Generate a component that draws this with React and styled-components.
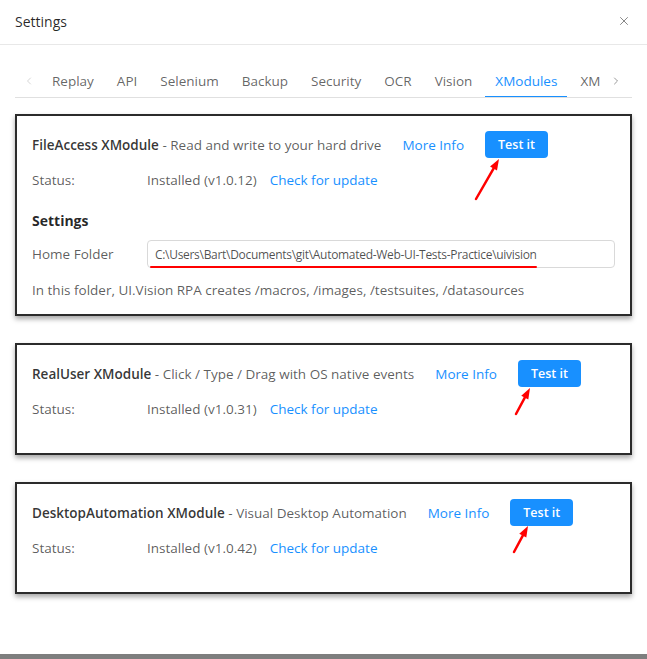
import React from "react";
import styled, { createGlobalStyle } from "styled-components";
import { X, ChevronLeft, ChevronRight } from "lucide-react";

const GlobalStyle = createGlobalStyle`
  html, body {
    margin: 0;
    padding: 0;
    background: #fff;
  }
  body {
    font-family: "Open Sans", "Noto Sans", sans-serif;
    color: rgba(0, 0, 0, 0.65);
  }
`;

const Page = styled.div`
  height: 659px;
  display: flex;
  flex-direction: column;
  overflow: hidden;
`;

const Modal = styled.div`
  flex: 1;
  background: #fff;
  display: flex;
  flex-direction: column;
`;

const Header = styled.div`
  height: 45px;
  box-sizing: border-box;
  border-bottom: 1px solid #e8e8e8;
  display: flex;
  align-items: center;
  justify-content: space-between;
  padding: 0 16px 2px 15px;
`;

const HeaderTitle = styled.div`
  font-size: 14px;
  color: rgba(0, 0, 0, 0.85);
`;

const CloseButton = styled.button`
  border: none;
  background: none;
  padding: 0;
  display: flex;
  color: #777;
  cursor: pointer;
`;

const Body = styled.div`
  padding: 20px 15px 0 15px;
`;

const TabBar = styled.div`
  display: flex;
  align-items: center;
  height: 32px;
  border-bottom: 1px solid #e0e0e0;
`;

const TabArrow = styled.div`
  width: ${({ $w }) => $w}px;
  display: flex;
  justify-content: center;
  color: ${({ $faded }) => ($faded ? "#c8c8c8" : "#777")};
  flex-shrink: 0;
`;

const TabList = styled.div`
  flex: 1;
  overflow: hidden;
  display: flex;
  height: 100%;
  white-space: nowrap;
`;

const Tab = styled.div`
  position: relative;
  flex-shrink: 0;
  padding: 0 10px;
  margin-right: 3px;
  height: 100%;
  display: flex;
  align-items: center;
  font-size: 13.5px;
  color: ${({ $active }) => ($active ? "#1890ff" : "rgba(0, 0, 0, 0.62)")};

  &::after {
    content: "";
    display: ${({ $active }) => ($active ? "block" : "none")};
    position: absolute;
    left: 0;
    right: 0;
    bottom: -1px;
    height: 2px;
    background: #1890ff;
  }
`;

const Cards = styled.div`
  display: flex;
  flex-direction: column;
  gap: 27px;
  margin-top: 16px;
`;

const Card = styled.div`
  border: 2px solid #2b2b2b;
  box-shadow: 0 3px 5px rgba(0, 0, 0, 0.35);
  padding: 15px 15px ${({ $pb }) => $pb}px 15px;
  display: flex;
  flex-direction: column;
`;

const TitleRow = styled.div`
  display: flex;
  align-items: center;
  height: 27px;
  font-size: 13.5px;
`;

const ModuleName = styled.span`
  font-weight: 600;
  color: rgba(0, 0, 0, 0.8);
`;

const Link = styled.a`
  color: #1890ff;
  text-decoration: none;
  cursor: pointer;
  margin-left: ${({ $ml }) => $ml || 0}px;
`;

const ButtonWrap = styled.div`
  position: relative;
  margin-left: 21px;
`;

const TestButton = styled.button`
  width: 63px;
  height: 27px;
  border: none;
  border-radius: 4px;
  background: #1890ff;
  color: #fff;
  font-family: inherit;
  font-size: 12.5px;
  font-weight: 600;
  cursor: pointer;
`;

const ArrowSvg = styled.svg`
  position: absolute;
  left: -30px;
  top: 0;
  overflow: visible;
  pointer-events: none;
`;

const Row = styled.div`
  display: flex;
  align-items: center;
  font-size: 13.5px;
  height: ${({ $h }) => $h || 20}px;
  margin-top: ${({ $mt }) => $mt || 0}px;
`;

const Label = styled.div`
  width: 115px;
  flex-shrink: 0;
`;

const SectionTitle = styled.div`
  font-size: 14px;
  font-weight: 700;
  line-height: 20px;
  color: rgba(0, 0, 0, 0.85);
  margin-top: 21px;
`;

const InputWrap = styled.div`
  position: relative;
  flex: 1;
`;

const Input = styled.div`
  height: 28px;
  box-sizing: border-box;
  border: 1px solid #d9d9d9;
  border-radius: 4px;
  display: flex;
  align-items: center;
  padding: 0 7px;
  font-size: 12px;
  letter-spacing: -0.3px;
  color: rgba(0, 0, 0, 0.7);
`;

const RedUnderline = styled.span`
  position: absolute;
  left: 3px;
  bottom: 0;
  width: 387px;
  height: 2px;
  border-radius: 1px;
  background: #f00;
`;

const BottomStrip = styled.div`
  height: 5px;
  background: #7e7e7e;
`;

const RedArrow = ({ tail, tip }) => {
  const off = 30;
  const dx = tip[0] - tail[0];
  const dy = tip[1] - tail[1];
  const len = Math.hypot(dx, dy);
  const ux = dx / len;
  const uy = dy / len;
  const bx = tip[0] - ux * 11;
  const by = tip[1] - uy * 11;
  const p1 = `${tip[0] + off},${tip[1]}`;
  const p2 = `${bx - uy * 4 + off},${by + ux * 4}`;
  const p3 = `${bx + uy * 4 + off},${by - ux * 4}`;
  return (
    <ArrowSvg width="80" height="80">
      <line
        x1={tail[0] + off}
        y1={tail[1]}
        x2={bx + off}
        y2={by}
        stroke="#f00"
        strokeWidth="2.5"
        strokeLinecap="round"
      />
      <polygon points={`${p1} ${p2} ${p3}`} fill="#f00" />
    </ArrowSvg>
  );
};

const tabs = ["Replay", "API", "Selenium", "Backup", "Security", "OCR", "Vision", "XModules", "XModules"];

const modules = [
  {
    name: "FileAccess XModule",
    desc: "Read and write to your hard drive",
    version: "v1.0.12",
    settings: true,
    arrow: { tail: [-9, 68], tip: [14, 28] },
  },
  {
    name: "RealUser XModule",
    desc: "Click / Type / Drag with OS native events",
    version: "v1.0.31",
    arrow: { tail: [-2, 54], tip: [12, 28] },
  },
  {
    name: "DesktopAutomation XModule",
    desc: "Visual Desktop Automation",
    version: "v1.0.42",
    arrow: { tail: [4, 53], tip: [18, 27] },
  },
];

const ModuleCard = ({ module }) => (
  <Card $pb={module.settings ? 14 : 34}>
    <TitleRow>
      <ModuleName>{module.name}</ModuleName>&nbsp;- {module.desc}
      <Link $ml={21}>More Info</Link>
      <ButtonWrap>
        <TestButton>Test it</TestButton>
        <RedArrow tail={module.arrow.tail} tip={module.arrow.tip} />
      </ButtonWrap>
    </TitleRow>
    <Row $mt={12}>
      <Label>Status:</Label>
      Installed ({module.version})
      <Link $ml={13}>Check for update</Link>
    </Row>
    {module.settings && (
      <>
        <SectionTitle>Settings</SectionTitle>
        <Row $h={28} $mt={9}>
          <Label>Home Folder</Label>
          <InputWrap>
            <Input>C:\Users\Bart\Documents\git\Automated-Web-UI-Tests-Practice\uivision</Input>
            <RedUnderline />
          </InputWrap>
        </Row>
        <Row $mt={12}>
          In this folder, UI.Vision RPA creates /macros, /images, /testsuites, /datasources
        </Row>
      </>
    )}
  </Card>
);

const App = () => (
  <Page>
    <GlobalStyle />
    <Modal>
      <Header>
        <HeaderTitle>Settings</HeaderTitle>
        <CloseButton>
          <X size={14} strokeWidth={1.5} />
        </CloseButton>
      </Header>
      <Body>
        <TabBar>
          <TabArrow $w={27} $faded>
            <ChevronLeft size={12} strokeWidth={1.5} />
          </TabArrow>
          <TabList>
            {tabs.map((t, i) => (
              <Tab key={i} $active={i === 7}>
                {t}
              </Tab>
            ))}
          </TabList>
          <TabArrow $w={32}>
            <ChevronRight size={12} strokeWidth={1.5} />
          </TabArrow>
        </TabBar>
        <Cards>
          {modules.map((m) => (
            <ModuleCard key={m.name} module={m} />
          ))}
        </Cards>
      </Body>
    </Modal>
    <BottomStrip />
  </Page>
);

export default App;
